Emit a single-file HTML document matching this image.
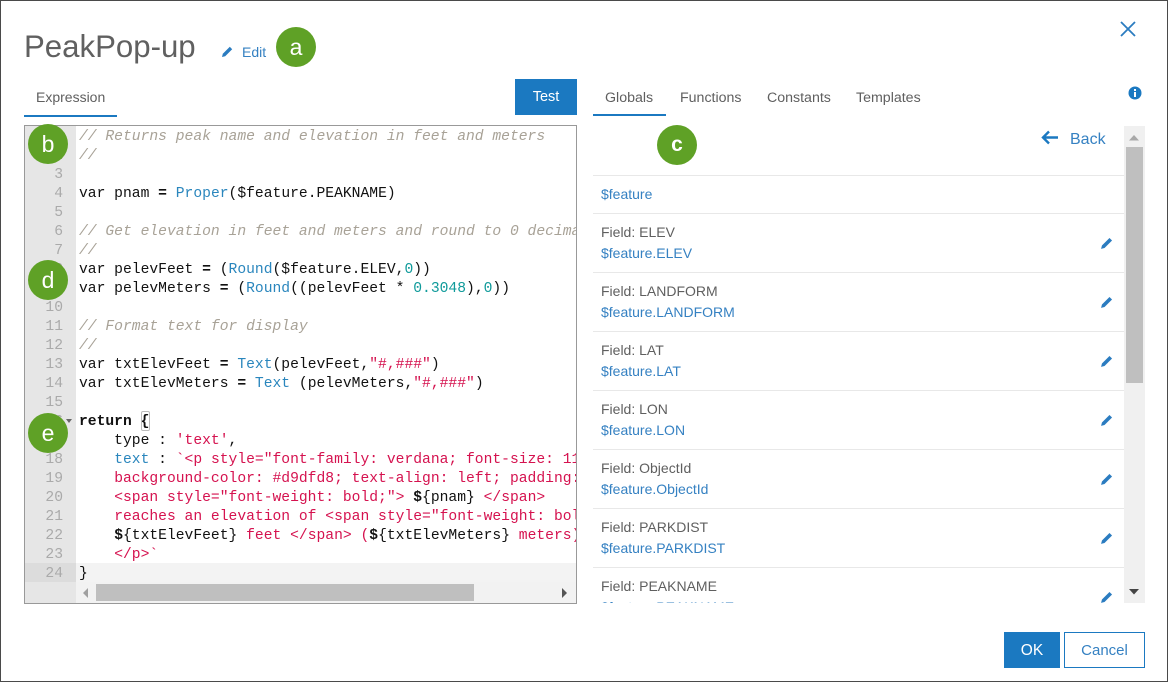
<!DOCTYPE html>
<html><head><meta charset="utf-8"><style>
html,body{margin:0;padding:0;background:#fff}
#p{position:relative;width:1168px;height:682px;overflow:hidden;background:#fff;font-family:"Liberation Sans",sans-serif;color:#595959}
#p div,#p span.a{position:absolute}
.bd{box-sizing:border-box;left:0;top:0;width:1168px;height:682px;border:1px solid #4a4a4a;z-index:9;pointer-events:none}
.t{white-space:nowrap;line-height:20px}
.c{width:40px;height:40px;border-radius:50%;background:#5fa126;color:#fff;font-size:23px;line-height:40px;text-align:center;z-index:5}
.code{position:absolute;left:79px;top:127.500px;width:497px;height:456px;overflow:hidden;font:14.67px/19px "Liberation Mono",monospace;color:#111;white-space:pre}
.code i{color:#a8a297}
.n{color:#2a86bd}.s{color:#d5124f}.g{color:#0f9a9a}
.nums{position:absolute;left:25px;top:127.500px;width:38px;font:14.67px/19px "Liberation Mono",monospace;color:#aaa;text-align:right;white-space:pre}
.sep{left:593px;width:531px;height:1px;background:#e8e8e8}
.f{left:601px;font-size:14px;color:#5f5f5f}
.v{left:601px;font-size:14px;color:#3581c2}
.tab{font-size:14.2px;color:#5f5f5f;top:88px}
</style></head><body><div id="p">
<div class="bd"></div>
<div class="t" style="left:24px;top:28px;font-size:31.200px;line-height:38px;color:#606060">PeakPop-up</div>
<svg style="position:absolute;left:221px;top:45px" width="13" height="13" viewBox="0 0 13 13"><path d="M1 12l.8-3.2L8.8 1.800l2.400 2.400-7 7z" fill="#2b7cc0"/></svg>
<div class="t" style="left:242px;top:42px;font-size:14px;color:#3581c2">Edit</div>
<div class="c" style="left:276px;top:27px">a</div>
<svg style="position:absolute;left:1120px;top:21px" width="16" height="16" viewBox="0 0 16 16"><path d="M1 1l14 14M15 1L1 15" stroke="#2b7cc0" stroke-width="1.800" fill="none"/></svg>

<div class="t" style="left:36px;top:87px;font-size:14px;color:#5f5f5f">Expression</div>
<div style="left:24px;top:115px;width:93px;height:2px;background:#1b79c1"></div>
<div class="t" style="left:515px;top:79px;width:62px;height:36px;line-height:37px;background:#1b79c1;color:#fff;font-size:14.500px;text-align:center">Test</div>

<div style="box-sizing:border-box;left:24px;top:125px;width:553px;height:479px;border:1px solid #999;background:#fff;overflow:hidden"></div>
<div style="left:25px;top:126px;width:51px;height:477px;background:#e6e6e6"></div>
<div style="left:76px;top:563px;width:500px;height:19px;background:#f3f3f3"></div>
<div style="left:25px;top:563px;width:51px;height:19px;background:#dcdcdc"></div>
<div style="left:76px;top:582px;width:500px;height:21px;background:#f2f2f2"></div>
<div style="left:96px;top:584px;width:378px;height:17px;background:#bfbfbf"></div>
<svg style="position:absolute;left:82px;top:587px" width="8" height="12"><path d="M6 1v10L1 6z" fill="#a0a0a0"/></svg>
<svg style="position:absolute;left:560px;top:587px" width="8" height="12"><path d="M2 1v10l5-5z" fill="#555"/></svg>
<div class="nums">1
2
3
4
5
6
7
8
9
10
11
12
13
14
15
16
17
18
19
20
21
22
23
24</div>
<svg style="position:absolute;left:66px;top:419px" width="7" height="5"><path d="M0 0h6L3 4z" fill="#666"/></svg>
<div style="box-sizing:border-box;left:141px;top:411px;width:9px;height:20px;border:1px solid #bbb;border-radius:2px"></div>
<div class="code"><i>// Returns peak name and elevation in feet and meters</i>
<i>//</i>

var pnam <b>=</b> <span class="n">Proper</span>($feature.PEAKNAME)

<i>// Get elevation in feet and meters and round to 0 decimal places</i>
<i>//</i>
var pelevFeet <b>=</b> (<span class="n">Round</span>($feature.ELEV,<span class="g">0</span>))
var pelevMeters <b>=</b> (<span class="n">Round</span>((pelevFeet * <span class="g">0.3048</span>),<span class="g">0</span>))

<i>// Format text for display</i>
<i>//</i>
var txtElevFeet <b>=</b> <span class="n">Text</span>(pelevFeet,<span class="s">"#,###"</span>)
var txtElevMeters <b>=</b> <span class="n">Text</span> (pelevMeters,<span class="s">"#,###"</span>)

<b>return {</b>
    type : <span class="s">'text'</span>,
    <span class="n">text</span> : <span class="s">`&lt;p style="font-family: verdana; font-size: 11px;</span>
    <span class="s">background-color: #d9dfd8; text-align: left; padding: 5px;</span>
    <span class="s">&lt;span style="font-weight: bold;"&gt; </span><b>$</b>{pnam}<span class="s"> &lt;/span&gt;</span>
    <span class="s">reaches an elevation of &lt;span style="font-weight: bold;"&gt;</span>
    <b>$</b>{txtElevFeet}<span class="s"> feet &lt;/span&gt; (</span><b>$</b>{txtElevMeters}<span class="s"> meters)</span>
    <span class="s">&lt;/p&gt;`</span>
}</div>
<div class="c" style="left:28px;top:124px">b</div>
<div class="c" style="left:28px;top:260px">d</div>
<div class="c" style="left:28px;top:413px">e</div>

<div class="t tab" style="left:605px">Globals</div>
<div style="left:593px;top:114px;width:73px;height:2px;background:#1b79c1"></div>
<div class="t tab" style="left:680px">Functions</div>
<div class="t tab" style="left:767px">Constants</div>
<div class="t tab" style="left:856px">Templates</div>
<svg style="position:absolute;left:1128px;top:86px" width="14" height="14" viewBox="0 0 14 14"><circle cx="7" cy="7" r="6.500" fill="#1b79c1"/><rect x="6" y="6" width="2" height="5" fill="#fff"/><rect x="6" y="3" width="2" height="2" fill="#fff"/></svg>
<div class="c" style="left:657px;top:125px;font-size:21px;font-weight:bold">c</div>
<svg style="position:absolute;left:1041px;top:130px" width="18" height="15" viewBox="0 0 18 15"><path d="M8 1.500L2 7.500l6 6M2 7.500h15" stroke="#1b79c1" stroke-width="2.400" fill="none"/></svg>
<div class="t" style="left:1070px;top:130px;font-size:16px;color:#3581c2">Back</div>

<div class="sep" style="top:175px"></div>
<div class="t v" style="top:184px">$feature</div>
<div class="sep" style="top:213px"></div>
<div class="t f" style="top:222px">Field: ELEV</div><div class="t v" style="top:243px">$feature.ELEV</div>
<div class="sep" style="top:272px"></div>
<div class="t f" style="top:281px">Field: LANDFORM</div><div class="t v" style="top:302px">$feature.LANDFORM</div>
<div class="sep" style="top:331px"></div>
<div class="t f" style="top:340px">Field: LAT</div><div class="t v" style="top:361px">$feature.LAT</div>
<div class="sep" style="top:390px"></div>
<div class="t f" style="top:399px">Field: LON</div><div class="t v" style="top:420px">$feature.LON</div>
<div class="sep" style="top:449px"></div>
<div class="t f" style="top:458px">Field: ObjectId</div><div class="t v" style="top:479px">$feature.ObjectId</div>
<div class="sep" style="top:508px"></div>
<div class="t f" style="top:517px">Field: PARKDIST</div><div class="t v" style="top:538px">$feature.PARKDIST</div>
<div class="sep" style="top:567px"></div>
<div class="t f" style="top:576px">Field: PEAKNAME</div>
<div style="left:601px;top:597px;width:300px;height:6px;overflow:hidden"><div class="t v" style="left:0;top:0">$feature.PEAKNAME</div></div>

<svg style="position:absolute;left:1100px;top:236px" width="14" height="14" viewBox="0 0 13 13"><path d="M1 12l.8-3.2L8.8 1.800l2.400 2.400-7 7z" fill="#2b7cc0"/></svg>
<svg style="position:absolute;left:1100px;top:295px" width="14" height="14" viewBox="0 0 13 13"><path d="M1 12l.8-3.2L8.8 1.800l2.400 2.400-7 7z" fill="#2b7cc0"/></svg>
<svg style="position:absolute;left:1100px;top:354px" width="14" height="14" viewBox="0 0 13 13"><path d="M1 12l.8-3.2L8.8 1.800l2.400 2.400-7 7z" fill="#2b7cc0"/></svg>
<svg style="position:absolute;left:1100px;top:413px" width="14" height="14" viewBox="0 0 13 13"><path d="M1 12l.8-3.2L8.8 1.800l2.400 2.400-7 7z" fill="#2b7cc0"/></svg>
<svg style="position:absolute;left:1100px;top:472px" width="14" height="14" viewBox="0 0 13 13"><path d="M1 12l.8-3.2L8.8 1.800l2.400 2.400-7 7z" fill="#2b7cc0"/></svg>
<svg style="position:absolute;left:1100px;top:531px" width="14" height="14" viewBox="0 0 13 13"><path d="M1 12l.8-3.2L8.8 1.800l2.400 2.400-7 7z" fill="#2b7cc0"/></svg>
<svg style="position:absolute;left:1100px;top:590px" width="14" height="14" viewBox="0 0 13 13"><path d="M1 12l.8-3.2L8.8 1.800l2.400 2.400-7 7z" fill="#2b7cc0"/></svg>

<div style="left:1124px;top:126px;width:21px;height:477px;background:#f0f0f0"></div>
<div style="left:1126px;top:147px;width:17px;height:236px;background:#bfbfbf"></div>
<svg style="position:absolute;left:1129px;top:134px" width="11" height="7"><path d="M0 6.500h10L5 1z" fill="#a8a8a8"/></svg>
<svg style="position:absolute;left:1129px;top:588px" width="11" height="7"><path d="M0 1h10L5 6.500z" fill="#444"/></svg>

<div class="t" style="left:1004px;top:632px;width:56px;height:36px;line-height:37px;background:#1b79c1;color:#fff;font-size:15.500px;text-align:center">OK</div>
<div class="t" style="box-sizing:border-box;left:1064px;top:632px;width:81px;height:36px;line-height:35px;border:1px solid #1b79c1;color:#3581c2;font-size:15px;text-align:center">Cancel</div>
</div></body></html>
